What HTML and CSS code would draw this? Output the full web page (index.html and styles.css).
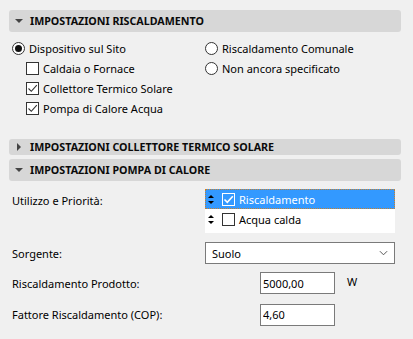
FILE: index.html
```html
<!DOCTYPE html>
<html lang="it">
<head>
    <meta charset="UTF-8">
    <title>Impostazioni Riscaldamento</title>
    <link rel="stylesheet" href="styles.css">
</head>
<body>
    <div class="panel">
        <div class="section-head open">
            <span class="tri"></span>IMPOSTAZIONI RISCALDAMENTO
        </div>
        <div class="options">
            <div class="col">
                <div class="opt"><span class="radio on"></span>Dispositivo sul Sito</div>
                <div class="opt sub"><span class="check"></span>Caldaia o Fornace</div>
                <div class="opt sub"><span class="check on"><svg viewBox="0 0 11 11"><path d="M1.5 5.5 L4.3 8.3 L9.8 2.2" /></svg></span>Collettore Termico Solare</div>
                <div class="opt sub"><span class="check on"><svg viewBox="0 0 11 11"><path d="M1.5 5.5 L4.3 8.3 L9.8 2.2" /></svg></span>Pompa di Calore Acqua</div>
            </div>
            <div class="col">
                <div class="opt"><span class="radio"></span>Riscaldamento Comunale</div>
                <div class="opt"><span class="radio"></span>Non ancora specificato</div>
            </div>
        </div>

        <div class="section-head closed slim">
            <span class="tri"></span>IMPOSTAZIONI COLLETTORE TERMICO SOLARE
        </div>
        <div class="section-head open">
            <span class="tri"></span>IMPOSTAZIONI POMPA DI CALORE
        </div>

        <div class="form">
            <div class="row row-list">
                <label>Utilizzo e Priorità:</label>
                <ul class="listbox">
                    <li class="selected"><span class="sort"></span><span class="check on"><svg viewBox="0 0 11 11"><path d="M1.5 5.5 L4.3 8.3 L9.8 2.2" /></svg></span>Riscaldamento</li>
                    <li><span class="sort"></span><span class="check"></span>Acqua calda</li>
                </ul>
            </div>
            <div class="row row-select">
                <label>Sorgente:</label>
                <div class="select">Suolo<svg class="chev" viewBox="0 0 10 6"><path d="M1 1 L5 5 L9 1" /></svg></div>
            </div>
            <div class="row row-input">
                <label>Riscaldamento Prodotto:</label>
                <div class="value"><input type="text" value="5000,00"><span class="unit">W</span></div>
            </div>
            <div class="row row-input">
                <label>Fattore Riscaldamento (COP):</label>
                <div class="value"><input type="text" value="4,60"></div>
            </div>
        </div>
    </div>
</body>
</html>
```

FILE: styles.css
```css
body {
    margin: 0;
    background: #f0f0f0;
    font-family: "Noto Sans", "Open Sans", sans-serif;
    font-size: 11px;
    color: #000;
}
.panel {
    padding: 10px 12px 0 9px;
}
.section-head {
    display: flex;
    align-items: center;
    height: 22px;
    background: #d7d7d7;
    border-radius: 3px;
    font-weight: bold;
    font-size: 10.7px;
    color: #0a0a0a;
    padding-left: 6px;
}
.section-head.slim {
    height: 16px;
    margin-top: 21px;
}
.section-head.slim + .section-head {
    margin-top: 4px;
}
.tri {
    width: 0;
    height: 0;
    margin-right: 7px;
}
.open .tri {
    border-left: 4px solid transparent;
    border-right: 4px solid transparent;
    border-top: 4px solid #444;
}
.closed .tri {
    border-top: 4px solid transparent;
    border-bottom: 4px solid transparent;
    border-left: 4px solid #444;
    margin-left: 2px;
    margin-right: 9px;
}
.options {
    display: grid;
    grid-template-columns: 193px 1fr;
    padding: 6px 0 0 3px;
}
.opt {
    display: flex;
    align-items: center;
    height: 20px;
}
.opt.sub {
    padding-left: 14px;
}
.radio {
    width: 11px;
    height: 11px;
    border: 1px solid #333;
    border-radius: 50%;
    margin-right: 4px;
    display: flex;
    align-items: center;
    justify-content: center;
    background: #fff;
}
.radio.on::after {
    content: "";
    width: 7px;
    height: 7px;
    border-radius: 50%;
    background: #111;
}
.check {
    width: 11px;
    height: 11px;
    border: 1px solid #333;
    background: #fff;
    margin-right: 4px;
    display: flex;
}
.check svg {
    width: 11px;
    height: 11px;
    fill: none;
    stroke: #333;
    stroke-width: 1.1;
}
.form {
    padding: 8px 0 0 3px;
}
.row {
    display: grid;
    grid-template-columns: 193px 1fr;
    align-items: center;
}
.row-list {
    height: 44px;
    align-items: start;
}
.row-list label {
    margin-top: 4px;
}
.row-select {
    margin-top: 9px;
    height: 22px;
}
.row-input {
    margin-top: 8px;
    height: 22px;
}
.row-input + .row-input {
    margin-top: 9px;
    height: 23px;
}
.listbox {
    list-style: none;
    margin: 0;
    padding: 0;
    background: #fff;
    height: 44px;
    width: 190px;
}
.listbox li {
    display: flex;
    align-items: center;
    height: 20px;
    padding-left: 3px;
}
.listbox li.selected {
    background: #3399ff;
    color: #fff;
    outline: 1px dotted #c7802c;
    outline-offset: -1px;
}
.sort {
    position: relative;
    width: 6px;
    height: 9px;
    margin-right: 8px;
}
.sort::before,
.sort::after {
    content: "";
    position: absolute;
    left: 0;
    border-left: 3px solid transparent;
    border-right: 3px solid transparent;
}
.sort::before {
    top: 0;
    border-bottom: 3px solid #000;
}
.sort::after {
    bottom: 0;
    border-top: 3px solid #000;
}
.selected .check {
    background: transparent;
    border-color: #fff;
}
.selected .check svg {
    stroke: #fff;
    stroke-width: 1.6;
}
.select {
    display: flex;
    align-items: center;
    justify-content: space-between;
    height: 20px;
    background: #fff;
    border: 1px solid #7a7a7a;
    padding-left: 6px;
    width: 182px;
}
.chev {
    width: 9px;
    height: 6px;
    margin-right: 6px;
    fill: none;
    stroke: #555;
    stroke-width: 1.1;
}
.value {
    display: flex;
    align-items: center;
    padding-left: 55px;
}
.value input {
    width: 71px;
    height: 20px;
    border: 1px solid #7a7a7a;
    padding: 0 0 0 2px;
    margin: 0;
    font: inherit;
    background: #fff;
    outline: none;
}
.unit {
    margin-left: 12px;
    margin-top: -4px;
}
```
